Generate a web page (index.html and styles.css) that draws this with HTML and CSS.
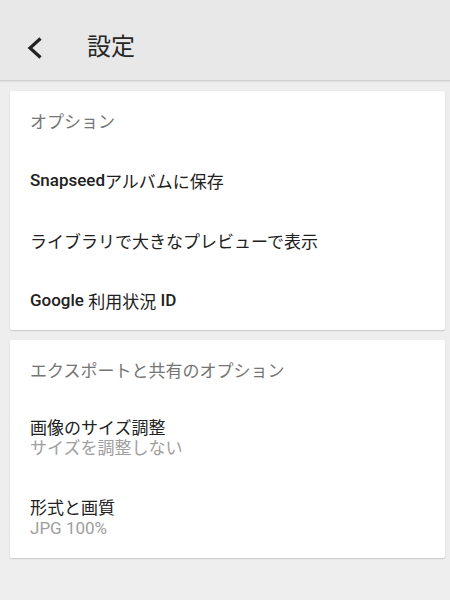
FILE: index.html
```html
<!DOCTYPE html>
<html lang="ja">
<head>
<meta charset="utf-8">
<title>設定</title>
<link rel="stylesheet" href="styles.css">
</head>
<body>
<header class="appbar">
  <span class="back">
    <svg width="24" height="24" viewBox="0 0 24 24"><polyline points="16.5,2.5 6,12 16.5,21.5" fill="none" stroke="#212121" stroke-width="3.2" stroke-linecap="butt" stroke-linejoin="miter"/></svg>
  </span>
  <h1 class="title">設定</h1>
</header>
<main class="content">
  <section class="card card-one">
    <div class="card-head">オプション</div>
    <div class="row"><span class="latin">Snapseed</span>アルバムに保存</div>
    <div class="row">ライブラリで大きなプレビューで表示</div>
    <div class="row"><span class="latin">Google</span>&nbsp;利用状況&nbsp;<span class="latin">ID</span></div>
  </section>
  <section class="card card-two">
    <div class="card-head">エクスポートと共有のオプション</div>
    <div class="row tall">
      <div class="row-title">画像のサイズ調整</div>
      <div class="row-sub">サイズを調整しない</div>
    </div>
    <div class="row tall">
      <div class="row-title">形式と画質</div>
      <div class="row-sub">JPG 100%</div>
    </div>
  </section>
</main>
</body>
</html>
```
FILE: styles.css
```css
html, body {
  margin: 0;
  padding: 0;
}
body {
  width: 450px;
  height: 600px;
  background: #eeeeee;
  font-family: Roboto, "Noto Sans CJK JP", sans-serif;
  color: #212121;
  overflow: hidden;
}
.appbar {
  height: 81px;
  box-sizing: border-box;
  padding-top: 14px;
  background: #e8e8e8;
  border-bottom: 1px solid #d2d2d2;
  box-shadow: 0 1px 1px rgba(0,0,0,0.05);
  display: flex;
  align-items: center;
}
.back {
  display: flex;
  margin-left: 24px;
  margin-top: 1px;
}
.title {
  margin: 0 0 0 39px;
  font-size: 24px;
  font-weight: 400;
  color: #262626;
  line-height: 30px;
}
.content {
  padding: 10px 5px 0 10px;
  display: flex;
  flex-direction: column;
  gap: 10px;
}
.card {
  background: #ffffff;
  box-shadow: 0 1px 1.5px rgba(0,0,0,0.16);
  border-radius: 2px;
  display: flex;
  flex-direction: column;
}
.card-head {
  height: 59px;
  display: flex;
  align-items: center;
  padding-left: 20px;
  font-size: 17px;
  color: #757575;
}
.card-two .card-head {
  height: 58px;
}
.row {
  height: 60px;
  display: flex;
  align-items: center;
  padding-left: 20px;
  font-size: 17px;
  color: #212121;
  white-space: pre;
}
.latin {
  font-weight: 500;
}
.row.tall {
  height: 80px;
  flex-direction: column;
  align-items: flex-start;
  justify-content: center;
}
.row-title {
  line-height: 20px;
  color: #212121;
}
.row-sub {
  line-height: 20px;
  color: #9e9e9e;
}
```
